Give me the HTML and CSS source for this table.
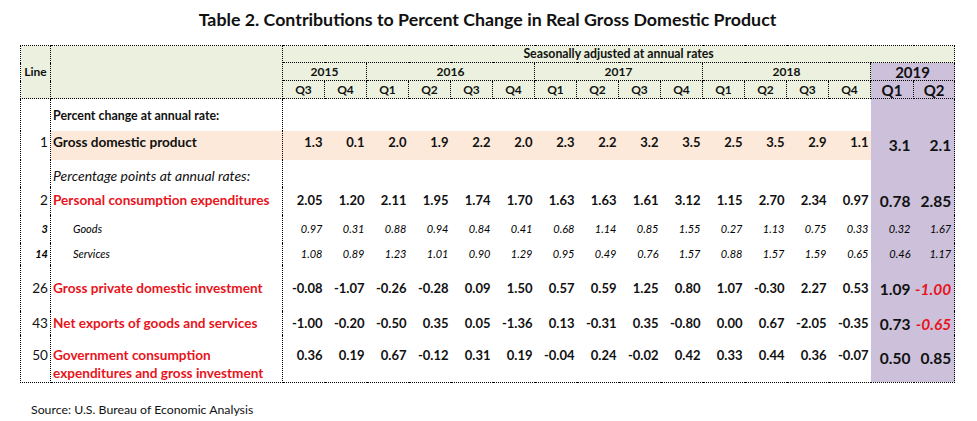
FILE: index.html
```html
<!DOCTYPE html>
<html>
<head>
<meta charset="utf-8">
<link rel="stylesheet" href="styles.css">
</head>
<body>
<div class="page">
  <h1 class="title">Table 2. Contributions to Percent Change in Real Gross Domestic Product</h1>
  <table class="gdp">
    <colgroup>
      <col class="c-line"><col class="c-desc">
      <col class="c-q"><col class="c-q"><col class="c-q"><col class="c-q"><col class="c-q"><col class="c-q"><col class="c-q">
      <col class="c-q"><col class="c-q"><col class="c-q"><col class="c-q"><col class="c-q"><col class="c-q"><col class="c-q">
      <col class="c-q19a"><col class="c-q19b">
    </colgroup>
    <thead>
      <tr class="h1">
        <th class="hline" rowspan="3">Line</th>
        <th class="hdesc" rowspan="3"></th>
        <th class="hsa" colspan="16">Seasonally adjusted at annual rates</th>
      </tr>
      <tr class="h2">
        <th colspan="2">2015</th>
        <th colspan="4">2016</th>
        <th colspan="4">2017</th>
        <th colspan="4">2018</th>
        <th colspan="2" class="p19 y19">2019</th>
      </tr>
      <tr class="h3">
        <th>Q3</th><th>Q4</th>
        <th>Q1</th><th>Q2</th><th>Q3</th><th>Q4</th>
        <th>Q1</th><th>Q2</th><th>Q3</th><th>Q4</th>
        <th>Q1</th><th>Q2</th><th>Q3</th><th>Q4</th>
        <th class="p19 y19">Q1</th><th class="p19 y19">Q2</th>
      </tr>
    </thead>
    <tbody>
      <tr class="r-pc">
        <td class="ln"></td><td class="desc sub-b">Percent change at annual rate:</td>
        <td colspan="14"></td><td class="p19"></td><td class="p19 last"></td>
      </tr>
      <tr class="r-gdp">
        <td class="ln big">1</td><td class="desc big peach">Gross domestic product</td>
        <td class="v peach">1.3</td><td class="v peach">0.1</td><td class="v peach">2.0</td><td class="v peach">1.9</td><td class="v peach">2.2</td><td class="v peach">2.0</td><td class="v peach">2.3</td>
        <td class="v peach">2.2</td><td class="v peach">3.2</td><td class="v peach">3.5</td><td class="v peach">2.5</td><td class="v peach">3.5</td><td class="v peach">2.9</td><td class="v peach">1.1</td>
        <td class="v p19 v19">3.1</td><td class="v p19 v19 last">2.1</td>
      </tr>
      <tr class="r-pp">
        <td class="ln"></td><td class="desc sub-i">Percentage points at annual rates:</td>
        <td colspan="14"></td><td class="p19"></td><td class="p19 last"></td>
      </tr>
      <tr class="r-pce">
        <td class="ln big">2</td><td class="desc big red">Personal consumption expenditures</td>
        <td class="v">2.05</td><td class="v">1.20</td><td class="v">2.11</td><td class="v">1.95</td><td class="v">1.74</td><td class="v">1.70</td><td class="v">1.63</td>
        <td class="v">1.63</td><td class="v">1.61</td><td class="v">3.12</td><td class="v">1.15</td><td class="v">2.70</td><td class="v">2.34</td><td class="v">0.97</td>
        <td class="v p19 v19">0.78</td><td class="v p19 v19 last">2.85</td>
      </tr>
      <tr class="r-goods">
        <td class="ln it">3</td><td class="desc it indent">Goods</td>
        <td class="vi">0.97</td><td class="vi">0.31</td><td class="vi">0.88</td><td class="vi">0.94</td><td class="vi">0.84</td><td class="vi">0.41</td><td class="vi">0.68</td>
        <td class="vi">1.14</td><td class="vi">0.85</td><td class="vi">1.55</td><td class="vi">0.27</td><td class="vi">1.13</td><td class="vi">0.75</td><td class="vi">0.33</td>
        <td class="vi p19 vi19">0.32</td><td class="vi p19 vi19 last">1.67</td>
      </tr>
      <tr class="r-serv">
        <td class="ln it">14</td><td class="desc it indent">Services</td>
        <td class="vi">1.08</td><td class="vi">0.89</td><td class="vi">1.23</td><td class="vi">1.01</td><td class="vi">0.90</td><td class="vi">1.29</td><td class="vi">0.95</td>
        <td class="vi">0.49</td><td class="vi">0.76</td><td class="vi">1.57</td><td class="vi">0.88</td><td class="vi">1.57</td><td class="vi">1.59</td><td class="vi">0.65</td>
        <td class="vi p19 vi19">0.46</td><td class="vi p19 vi19 last">1.17</td>
      </tr>
      <tr class="r-gpdi">
        <td class="ln big">26</td><td class="desc big red">Gross private domestic investment</td>
        <td class="v">-0.08</td><td class="v">-1.07</td><td class="v">-0.26</td><td class="v">-0.28</td><td class="v">0.09</td><td class="v">1.50</td><td class="v">0.57</td>
        <td class="v">0.59</td><td class="v">1.25</td><td class="v">0.80</td><td class="v">1.07</td><td class="v">-0.30</td><td class="v">2.27</td><td class="v">0.53</td>
        <td class="v p19 v19">1.09</td><td class="v p19 v19 neg last">-1.00</td>
      </tr>
      <tr class="r-nx">
        <td class="ln big">43</td><td class="desc big red">Net exports of goods and services</td>
        <td class="v">-1.00</td><td class="v">-0.20</td><td class="v">-0.50</td><td class="v">0.35</td><td class="v">0.05</td><td class="v">-1.36</td><td class="v">0.13</td>
        <td class="v">-0.31</td><td class="v">0.35</td><td class="v">-0.80</td><td class="v">0.00</td><td class="v">0.67</td><td class="v">-2.05</td><td class="v">-0.35</td>
        <td class="v p19 v19">0.73</td><td class="v p19 v19 neg last">-0.65</td>
      </tr>
      <tr class="r-gov">
        <td class="ln big">50</td><td class="desc big red">Government consumption expenditures and gross investment</td>
        <td class="v">0.36</td><td class="v">0.19</td><td class="v">0.67</td><td class="v">-0.12</td><td class="v">0.31</td><td class="v">0.19</td><td class="v">-0.04</td>
        <td class="v">0.24</td><td class="v">-0.02</td><td class="v">0.42</td><td class="v">0.33</td><td class="v">0.44</td><td class="v">0.36</td><td class="v">-0.07</td>
        <td class="v p19 v19">0.50</td><td class="v p19 v19 last">0.85</td>
      </tr>
    </tbody>
  </table>
  <p class="source">Source: U.S. Bureau of Economic Analysis</p>
</div>
</body>
</html>
```

FILE: styles.css
```css
html, body {
  margin: 0;
  padding: 0;
  background: #ffffff;
}

.page {
  font-family: "Lato", "Open Sans", sans-serif;
  color: #111111;
  padding: 8px 0 0 20px;
  width: 957px;
}

.title {
  margin: 0;
  height: 37px;
  width: 935px;
  text-align: center;
  font-size: 17.8px;
  font-weight: 700;
  line-height: 22px;
  color: #111111;
}

.gdp {
  border-collapse: collapse;
  table-layout: fixed;
  width: 933px;
}

.c-line { width: 30px; }
.c-desc { width: 232px; }
.c-q { width: 42px; }
.c-q19a { width: 43px; }
.c-q19b { width: 41px; }

.gdp th {
  background: #ebf1de;
  border: 1px dotted #000000;
  font-size: 12px;
  line-height: 14px;
  font-weight: 700;
  padding: 0;
  text-align: center;
  vertical-align: middle;
}

.gdp .h1 { height: 17px; }
.gdp .h2 { height: 18px; }
.gdp .h3 { height: 18px; }

.gdp th.hsa { font-size: 12.3px; }

.gdp th.y19 {
  background: #ccc0da;
  font-size: 15px;
  line-height: 16px;
}

.gdp td {
  padding: 0;
  vertical-align: middle;
  white-space: nowrap;
}

.gdp td.ln {
  border-left: 1px dotted #000000;
  border-right: 1px dotted #000000;
  text-align: right;
  padding-right: 2px;
}

.gdp td.desc {
  border-right: 1px dotted #000000;
  padding-left: 2px;
}

.gdp td.last { border-right: 1px dotted #000000; }
.gdp tbody tr:last-child td { border-bottom: 1px dotted #000000; }

.gdp .p19 { background: #ccc0da; }
.gdp .peach { background: #fde9d9; }

.gdp .sub-b { font-size: 12.4px; font-weight: 700; }
.gdp .sub-i { font-size: 14px; font-style: italic; }

.gdp .big { font-size: 13.6px; font-weight: 700; }
.gdp td.ln.big { font-weight: 400; font-size: 13.6px; }
.gdp .red { color: #e8141c; }

.gdp .it { font-size: 11px; font-style: italic; color: #000000; }
.gdp td.ln.it { font-weight: 700; }
.gdp td.indent { padding-left: 22px; }

.gdp td.v {
  text-align: right;
  padding-right: 2px;
  font-size: 13px;
  font-weight: 700;
}

.gdp td.vi {
  text-align: right;
  padding-right: 2px;
  font-size: 11px;
  font-style: italic;
  color: #000000;
}

.gdp td.v19 {
  font-size: 15.5px;
  padding-right: 3px;
  padding-top: 3px;
}

.gdp td.vi19 { padding-right: 3px; }

.gdp td.neg { color: #e8141c; font-style: italic; }

.gdp .r-pc { height: 32px; }
.gdp .r-pc td.desc { padding-top: 1px; }
.gdp .r-gdp { height: 29px; }
.gdp .r-gdp td { padding-bottom: 7px; }
.gdp .r-gdp td.v19 { padding-bottom: 2px; padding-top: 1px; }
.gdp .r-pp { height: 27px; }
.gdp .r-pp td.desc { padding-top: 4px; }
.gdp .r-pce { height: 28px; }
.gdp .r-pce td { padding-bottom: 2px; }
.gdp .r-goods { height: 28px; }
.gdp .r-serv { height: 22px; }
.gdp .r-gpdi { height: 46px; }
.gdp .r-nx { height: 24px; }
.gdp .r-gov { height: 40px; }
.gdp .r-gov td { vertical-align: top; padding-top: 12px; }
.gdp .r-gov td.desc { white-space: normal; line-height: 18px; padding-top: 11px; }
.gdp .r-gov td.v19 { padding-top: 14px; }

.source {
  margin: 19px 0 0 11px;
  font-size: 12.3px;
  color: #111111;
}
```
